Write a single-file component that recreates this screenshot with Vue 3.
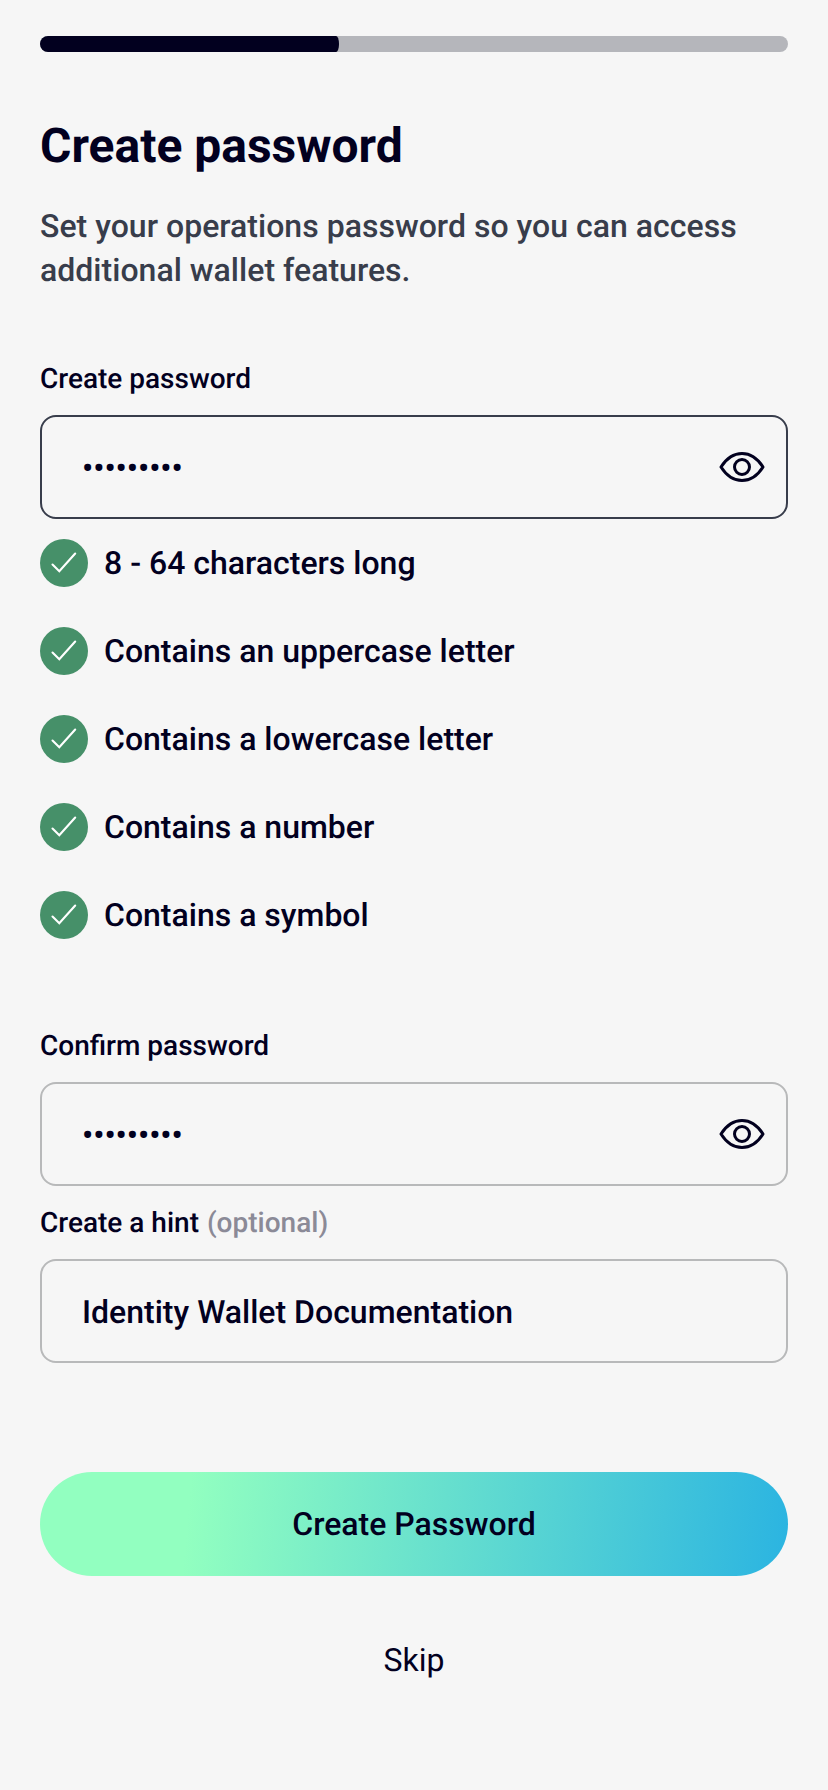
<script setup>
import { ref } from 'vue'

const progress = 40
const rules = [
  '8 - 64 characters long',
  'Contains an uppercase letter',
  'Contains a lowercase letter',
  'Contains a number',
  'Contains a symbol',
]
const masked = ref('•'.repeat(9))
const hint = ref('Identity Wallet Documentation')
</script>

<template>
  <main class="screen">
    <div class="progress">
      <div class="progress-fill" :style="{ width: progress + '%' }"></div>
    </div>

    <h1 class="title">Create password</h1>
    <p class="subtitle">Set your operations password so you can access additional wallet features.</p>

    <div class="label">Create password</div>
    <div class="field active">
      <span class="value">{{ masked }}</span>
      <svg class="eye" width="48" height="48" viewBox="0 0 48 48">
        <path d="M3 24C8.600 15.200 15.800 10.500 24 10.500S39.400 15.200 45 24C39.400 32.800 32.200 37.500 24 37.500S8.600 32.800 3 24Z" />
        <circle cx="24" cy="24" r="7.500" />
      </svg>
    </div>

    <ul class="rules">
      <li v-for="rule in rules" :key="rule" class="rule">
        <svg class="check" width="48" height="48" viewBox="0 0 48 48">
          <circle cx="24" cy="24" r="24" />
          <path d="M12.500 25.500L19.300 32.300L35.200 14.500" />
        </svg>
        <span>{{ rule }}</span>
      </li>
    </ul>

    <div class="label">Confirm password</div>
    <div class="field">
      <span class="value">{{ masked }}</span>
      <svg class="eye" width="48" height="48" viewBox="0 0 48 48">
        <path d="M3 24C8.600 15.200 15.800 10.500 24 10.500S39.400 15.200 45 24C39.400 32.800 32.200 37.500 24 37.500S8.600 32.800 3 24Z" />
        <circle cx="24" cy="24" r="7.500" />
      </svg>
    </div>

    <div class="label hint-label">Create a hint <span class="optional">(optional)</span></div>
    <div class="field">
      <span class="value">{{ hint }}</span>
    </div>

    <button class="primary" type="button">Create Password</button>
    <button class="skip" type="button">Skip</button>
  </main>
</template>

<style>
body {
  margin: 0;
  background: #f6f6f6;
}
</style>

<style scoped>
.screen {
  box-sizing: border-box;
  display: flex;
  flex-direction: column;
  width: 828px;
  height: 1790px;
  padding: 36px 40px 0;
  background: #f6f6f6;
  color: #02001f;
  font-family: Roboto, 'Liberation Sans', sans-serif;
  font-size: 32px;
  font-weight: 500;
  text-rendering: geometricPrecision;
}
.progress {
  height: 16px;
  border-radius: 8px;
  background: #b5b6bb;
  overflow: hidden;
}
.progress-fill {
  height: 100%;
  border-radius: 0 3px 3px 0 / 0 8px 8px 0;
  background: #02001f;
}
.title {
  margin: 66px 0 0;
  font-size: 48px;
  line-height: 56px;
  font-weight: 700;
}
.subtitle {
  margin: 30px 0 0;
  line-height: 44px;
  letter-spacing: 0.02px;
  color: #383d4b;
}
.label {
  margin-top: 67px;
  font-size: 28px;
  line-height: 40px;
}
.field {
  box-sizing: border-box;
  display: flex;
  align-items: center;
  justify-content: space-between;
  height: 104px;
  margin-top: 16px;
  padding: 0 20px 0 40px;
  border: 2px solid #b8b9ba;
  border-radius: 16px;
  line-height: 44px;
}
.field.active {
  border-color: #383d4b;
}
.value {
  padding-top: 2px;
}
.eye {
  fill: none;
  stroke: #02001f;
  stroke-width: 3;
  stroke-linejoin: round;
}
.rules {
  display: flex;
  flex-direction: column;
  gap: 40px;
  margin: 20px 0 20px;
  padding: 0;
  list-style: none;
}
.rule {
  display: flex;
  align-items: center;
  gap: 16px;
  height: 48px;
  line-height: 44px;
}
.check circle {
  fill: #469069;
}
.check path {
  fill: none;
  stroke: #fff;
  stroke-width: 2.1;
  stroke-linecap: round;
}
.hint-label {
  margin-top: 17px;
}
.optional {
  margin-left: 1px;
  color: #8b8a97;
}
.primary,
.skip {
  padding: 0;
  border: 0;
  color: #02001f;
  font: inherit;
  text-rendering: inherit;
}
.primary {
  height: 104px;
  margin-top: 109px;
  border-radius: 52px;
  background: linear-gradient(95deg, #92ffc0 20%, #2bb4e1 100%);
}
.skip {
  align-self: center;
  margin-top: 62px;
  line-height: 44px;
  font-weight: 400;
  background: none;
}
</style>
